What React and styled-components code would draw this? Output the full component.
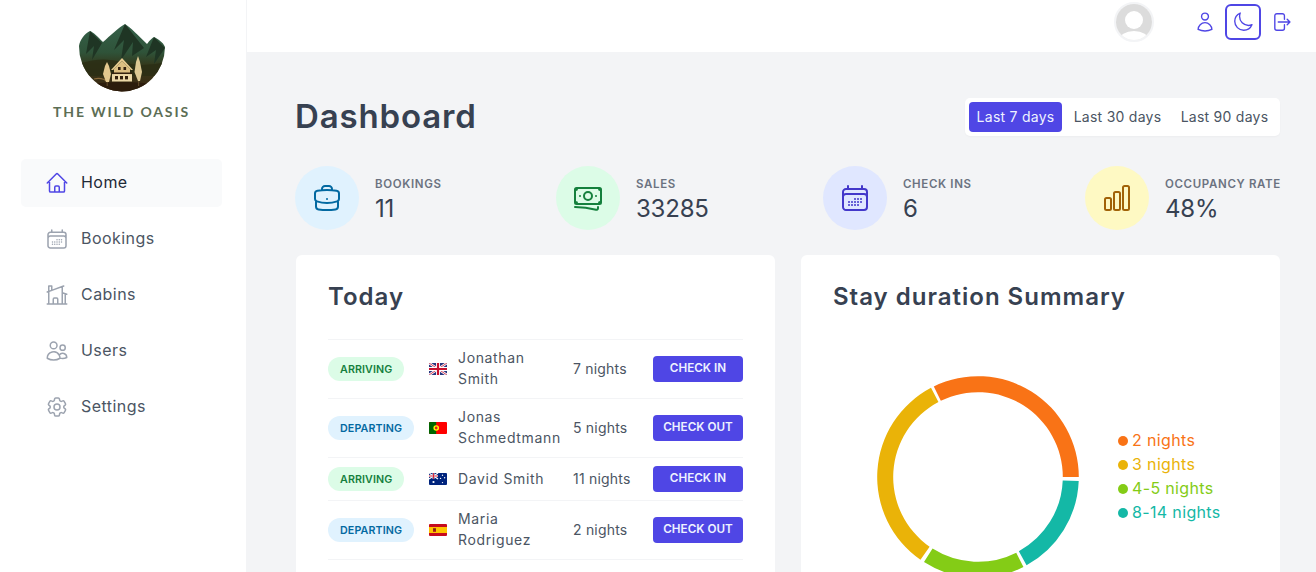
import React from "react";
import styled, { createGlobalStyle } from "styled-components";
import {
  HiOutlineHome,
  HiOutlineCalendarDays,
  HiOutlineHomeModern,
  HiOutlineUsers,
  HiOutlineCog6Tooth,
  HiOutlineBriefcase,
  HiOutlineBanknotes,
  HiOutlineChartBar,
  HiOutlineUser,
  HiOutlineMoon,
  HiOutlineArrowRightOnRectangle,
} from "react-icons/hi2";

const GlobalStyle = createGlobalStyle`
  * { box-sizing: border-box; }
  html, body { margin: 0; height: 100%; overflow: hidden; }
  body {
    font-family: Inter, "Noto Sans", "Liberation Sans", sans-serif;
    color: #374151;
    background: #f3f4f6;
  }
`;

const Layout = styled.div`
  display: grid;
  grid-template-columns: 247px 1fr;
  height: 100vh;
  overflow: hidden;
`;

const Sidebar = styled.aside`
  background: #fff;
  border-right: 1px solid #f3f4f6;
  padding: 24px 24px 0 21px;
`;

const LogoBox = styled.div`
  display: flex;
  flex-direction: column;
  align-items: center;
  margin-bottom: 37px;
`;

const LogoText = styled.div`
  font-family: Lato, "Liberation Sans", sans-serif;
  font-size: 14px;
  font-weight: 700;
  line-height: 20px;
  letter-spacing: 1.85px;
  color: #5c6e55;
  margin-top: 10px;
  white-space: nowrap;
`;

const NavList = styled.nav`
  display: flex;
  flex-direction: column;
  gap: 8px;
`;

const NavItem = styled.a`
  display: flex;
  align-items: center;
  gap: 12px;
  height: 48px;
  padding-left: 24px;
  border-radius: 5px;
  font-size: 16px;
  letter-spacing: 0.45px;
  color: ${(p) => (p.$active ? "#1f2937" : "#4b5563")};
  background: ${(p) => (p.$active ? "#f9fafb" : "transparent")};
  svg {
    width: 24px;
    height: 24px;
    color: ${(p) => (p.$active ? "#4f46e5" : "#9ca3af")};
  }
`;

const NavLabel = styled.span`
  margin-bottom: 2px;
`;

const Column = styled.div`
  display: flex;
  flex-direction: column;
  min-width: 0;
`;

const Header = styled.header`
  display: flex;
  justify-content: flex-end;
  align-items: center;
  height: 52px;
  padding: 2px 17px 10px 0;
  background: #fff;
`;

const Avatar = styled.div`
  width: 40px;
  height: 40px;
  border-radius: 50%;
  border: 2px solid #f3f4f6;
  overflow: hidden;
  margin-right: 33px;
  svg { display: block; }
`;

const HeaderIcons = styled.div`
  display: flex;
  gap: 2px;
`;

const IconButton = styled.button`
  display: flex;
  align-items: center;
  justify-content: center;
  width: 36px;
  height: 36px;
  padding: 0;
  background: none;
  border: ${(p) => (p.$focused ? "2px solid #4f46e5" : "none")};
  border-radius: 6px;
  color: #4f46e5;
  svg { width: 22px; height: 22px; }
`;

const Main = styled.main`
  padding: 46px 36px 0 49px;
`;

const TitleRow = styled.div`
  display: flex;
  justify-content: space-between;
  align-items: center;
  height: 38px;
`;

const PageTitle = styled.h1`
  margin: 0 0 2px -1px;
  font-size: 33px;
  font-weight: 600;
  letter-spacing: 0.85px;
  color: #374151;
`;

const Filter = styled.div`
  display: flex;
  align-items: center;
  height: 38px;
  width: 315px;
  padding: 4px;
  background: #fff;
  border-radius: 5px;
  box-shadow: 0 1px 2px rgba(0, 0, 0, 0.03);
`;

const FilterButton = styled.button`
  height: 30px;
  width: ${(p) => p.$width}px;
  padding: 0 0 2px;
  border: none;
  border-radius: 4px;
  font-family: inherit;
  font-size: 14px;
  letter-spacing: 0.25px;
  white-space: nowrap;
  background: ${(p) => (p.$active ? "#4f46e5" : "transparent")};
  color: ${(p) => (p.$active ? "#eef2ff" : "#4b5563")};
`;

const StatsRow = styled.div`
  display: grid;
  grid-template-columns: 261px 267px 262px 1fr;
  margin: 30px 0 25px -1px;
`;

const Stat = styled.div`
  display: flex;
  align-items: center;
  gap: 16px;
  white-space: nowrap;
`;

const StatIcon = styled.div`
  display: flex;
  align-items: center;
  justify-content: center;
  width: 64px;
  height: 64px;
  border-radius: 50%;
  background: ${(p) => p.$bg};
  color: ${(p) => p.$color};
  svg { width: 32px; height: 32px; }
`;

const StatText = styled.div`
  padding-top: 4px;
`;

const StatLabel = styled.div`
  font-size: 11.5px;
  font-weight: 600;
  line-height: 16px;
  letter-spacing: 0.65px;
  text-transform: uppercase;
  color: #6b7280;
`;

const StatValue = styled.div`
  margin-top: 1px;
  font-size: 24px;
  line-height: 32px;
  letter-spacing: -0.2px;
  color: #374151;
`;

const CardGrid = styled.div`
  display: grid;
  grid-template-columns: 1fr 1fr;
  gap: 26px;
`;

const Card = styled.section`
  background: #fff;
  border-radius: 6px;
  padding: 24px 32px;
  height: 420px;
`;

const CardTitle = styled.h2`
  margin: 0;
  font-size: 24px;
  font-weight: 600;
  line-height: 36px;
  letter-spacing: 1px;
  color: #374151;
`;

const ActivityList = styled.ul`
  list-style: none;
  margin: 24px 0 0;
  padding: 0;
  border-bottom: 1px solid #f3f4f6;
`;

const ActivityRow = styled.li`
  display: grid;
  grid-template-columns: 89px 17px 103px 68px 90px;
  gap: 12px;
  align-items: center;
  padding: 8px 0;
  border-top: 1px solid #f3f4f6;
  font-size: 14px;
  line-height: 21px;
  letter-spacing: 0.2px;
  color: #4b5563;
`;

const Tag = styled.span`
  justify-self: start;
  display: flex;
  align-items: center;
  height: 24px;
  padding: 0 12px;
  border-radius: 100px;
  font-size: 10.7px;
  font-weight: 600;
  letter-spacing: 0.1px;
  text-transform: uppercase;
  white-space: nowrap;
  background: ${(p) => (p.$status === "arriving" ? "#dcfce7" : "#e0f2fe")};
  color: ${(p) => (p.$status === "arriving" ? "#15803d" : "#0369a1")};
`;

const Flag = styled.svg`
  display: block;
  width: 18px;
  height: 12px;
  border-radius: 1px;
`;

const GuestName = styled.div`
  margin: -1px 0 1px;
  letter-spacing: 0.65px;
  color: #4b5563;
`;

const Nights = styled.div`
  margin: -1px 0 1px;
  white-space: nowrap;
  color: #4b5563;
`;

const CheckButton = styled.button`
  height: 26px;
  padding: 0 0 2px;
  border: none;
  border-radius: 4px;
  background: #4f46e5;
  color: #eef2ff;
  font-family: inherit;
  font-size: 11.7px;
  font-weight: 600;
  white-space: nowrap;
  text-transform: uppercase;
`;

const ChartRow = styled.div`
  display: flex;
  align-items: center;
  margin-top: 42px;
  padding-left: 5px;
`;

const Legend = styled.ul`
  list-style: none;
  margin: 0;
  padding: 0;
`;

const LegendItem = styled.li`
  display: flex;
  align-items: center;
  gap: 4px;
  height: 24px;
  font-size: 16px;
  letter-spacing: 0.35px;
  white-space: nowrap;
  color: ${(p) => p.$color};
  &::before {
    content: "";
    width: 10px;
    height: 10px;
    border-radius: 50%;
    background: ${(p) => p.$color};
  }
`;

const LegendLabel = styled.span`
  margin-bottom: 2px;
`;

const navItems = [
  { label: "Home", icon: HiOutlineHome, active: true },
  { label: "Bookings", icon: HiOutlineCalendarDays },
  { label: "Cabins", icon: HiOutlineHomeModern },
  { label: "Users", icon: HiOutlineUsers },
  { label: "Settings", icon: HiOutlineCog6Tooth },
];

const stats = [
  { label: "Bookings", value: "11", icon: HiOutlineBriefcase, bg: "#e0f2fe", color: "#0369a1" },
  { label: "Sales", value: "33285", icon: HiOutlineBanknotes, bg: "#dcfce7", color: "#15803d" },
  { label: "Check ins", value: "6", icon: HiOutlineCalendarDays, bg: "#e0e7ff", color: "#4338ca" },
  { label: "Occupancy rate", value: "48%", icon: HiOutlineChartBar, bg: "#fef9c3", color: "#a16207" },
];

const activities = [
  { status: "arriving", flag: "gb", name: "Jonathan Smith", nights: 7 },
  { status: "departing", flag: "pt", name: "Jonas Schmedtmann", nights: 5 },
  { status: "arriving", flag: "au", name: "David Smith", nights: 11 },
  { status: "departing", flag: "es", name: "Maria Rodriguez", nights: 2 },
];

const slices = [
  { label: "2 nights", color: "#f97316", from: 334, to: 450 },
  { label: "3 nights", color: "#eab308", from: 214.8, to: 332.2 },
  { label: "4-5 nights", color: "#84cc16", from: 153.2, to: 212.4 },
  { label: "8-14 nights", color: "#14b8a6", from: 92.3, to: 151.2 },
];

function FlagIcon({ code }) {
  if (code === "gb") {
    return (
      <Flag viewBox="0 0 18 12">
        <rect width="18" height="12" fill="#27357e" />
        <path d="M0 0L18 12M18 0L0 12" stroke="#fff" strokeWidth="2.4" />
        <path d="M0 0L18 12M18 0L0 12" stroke="#c8102e" strokeWidth="0.8" />
        <path d="M9 0V12M0 6H18" stroke="#fff" strokeWidth="4" />
        <path d="M9 0V12M0 6H18" stroke="#c8102e" strokeWidth="2.2" />
      </Flag>
    );
  }
  if (code === "pt") {
    return (
      <Flag viewBox="0 0 18 12">
        <rect width="18" height="12" fill="#f00" />
        <rect width="7.2" height="12" fill="#060" />
        <circle cx="7.2" cy="6" r="2.8" fill="#ff0" />
        <circle cx="7.2" cy="6" r="1.4" fill="#d22" />
      </Flag>
    );
  }
  if (code === "au") {
    return (
      <Flag viewBox="0 0 18 12">
        <rect width="18" height="12" fill="#00247d" />
        <path d="M0 0L9 6M9 0L0 6" stroke="#fff" strokeWidth="1.2" />
        <path d="M4.5 0V6M0 3H9" stroke="#fff" strokeWidth="1.8" />
        <path d="M4.5 0V6M0 3H9" stroke="#cf142b" strokeWidth="0.9" />
        <circle cx="4.5" cy="9" r="1.1" fill="#fff" />
        <circle cx="13.5" cy="2.2" r="0.7" fill="#fff" />
        <circle cx="11.5" cy="5.4" r="0.7" fill="#fff" />
        <circle cx="15.6" cy="4.8" r="0.7" fill="#fff" />
        <circle cx="13.5" cy="9.6" r="0.7" fill="#fff" />
      </Flag>
    );
  }
  return (
    <Flag viewBox="0 0 18 12">
      <rect width="18" height="12" fill="#c60b1e" />
      <rect y="3" width="18" height="6" fill="#ffc400" />
      <rect x="4" y="4.2" width="3" height="3.6" fill="#ad1519" />
      <rect x="4.6" y="4.8" width="1.8" height="1.4" fill="#5c3d11" />
    </Flag>
  );
}

function Logo() {
  const outline =
    "M1 22 C2 16 6 10 12 7 C15 8 20 13 25 18 C32 12 41 3 47 0 C52 3 61 12 69 20 C72 16 74 14 76 13 C80 15 85 18 87 23 A43 45 0 0 1 1 22 Z";
  return (
    <svg width="88" height="68" viewBox="0 0 88 68">
      <defs>
        <linearGradient id="logoFill" x1="0" y1="0" x2="0" y2="1">
          <stop offset="0" stopColor="#35614a" />
          <stop offset="0.42" stopColor="#2f5339" />
          <stop offset="0.6" stopColor="#33391d" />
          <stop offset="1" stopColor="#3e2810" />
        </linearGradient>
        <clipPath id="logoClip">
          <path d={outline} />
        </clipPath>
      </defs>
      <path d={outline} fill="url(#logoFill)" />
      <g clipPath="url(#logoClip)">
        <path d="M12 7L8 30L16 22L14 36L24 19Z" fill="#1f3524" />
        <path d="M47 0L36 26L46 16L43 36L55 18L54 32L66 24Z" fill="#1f3524" />
        <path d="M76 13L68 33L78 26L76 40L87 24Z" fill="#1f3524" />
        <path d="M0 40Q24 32 44 38T88 38V52H0Z" fill="#2a2d14" opacity="0.8" />
        <path d="M0 62Q44 54 88 62V70H0Z" fill="#2c1c0c" />
        <path d="M16 55Q24 53 30 58" stroke="#8a6a3c" strokeWidth="1.2" fill="none" />
      </g>
      <path d="M28 58L25 50L27 42L29 38L31 42L33 50L31 58Z" fill="#e3c88f" />
      <rect x="28.6" y="58" width="1.2" height="4" fill="#5c4526" />
      <path d="M60 57L56.5 48L58 38L60 32L62 38L64 48L62 57Z" fill="#dcc894" />
      <rect x="60" y="57" width="1.2" height="5" fill="#5c4526" />
      <path d="M33 46L44 34L55 46L53 46L44 37L35 46Z" fill="#e5c98f" />
      <path d="M36 45L44 37L52 45V57H36Z" fill="#dcbf82" />
      <rect x="34" y="48.5" width="20" height="1.6" fill="#33210f" />
      <rect x="34" y="50.1" width="20" height="7.4" fill="#ecd8a8" />
      <rect x="37" y="52" width="3" height="3.4" fill="#33210f" />
      <rect x="42" y="52" width="3" height="3.4" fill="#33210f" />
      <rect x="47" y="52" width="3" height="3.4" fill="#33210f" />
      <rect x="40" y="43" width="2.6" height="3" fill="#33210f" />
      <rect x="45.5" y="43" width="2.6" height="3" fill="#33210f" />
    </svg>
  );
}

function polar(r, deg) {
  const a = ((deg - 90) * Math.PI) / 180;
  return `${(140 + r * Math.cos(a)).toFixed(2)} ${(120 + r * Math.sin(a)).toFixed(2)}`;
}

function slicePath({ from, to }) {
  const outer = 100.8;
  const inner = 84.8;
  const large = to - from > 180 ? 1 : 0;
  return `M${polar(outer, from)}A${outer} ${outer} 0 ${large} 1 ${polar(outer, to)}L${polar(inner, to)}A${inner} ${inner} 0 ${large} 0 ${polar(inner, from)}Z`;
}

export default function App() {
  return (
    <>
      <GlobalStyle />
      <Layout>
        <Sidebar>
          <LogoBox>
            <Logo />
            <LogoText>THE WILD OASIS</LogoText>
          </LogoBox>
          <NavList>
            {navItems.map((item) => (
              <NavItem key={item.label} $active={item.active}>
                <item.icon />
                <NavLabel>{item.label}</NavLabel>
              </NavItem>
            ))}
          </NavList>
        </Sidebar>

        <Column>
          <Header>
            <Avatar>
              <svg width="36" height="36" viewBox="0 0 36 36">
                <rect width="36" height="36" fill="#dcdcdc" />
                <circle cx="18" cy="16" r="9" fill="#fff" />
                <ellipse cx="18" cy="36" rx="15" ry="9" fill="#fff" />
              </svg>
            </Avatar>
            <HeaderIcons>
              <IconButton><HiOutlineUser /></IconButton>
              <IconButton $focused><HiOutlineMoon /></IconButton>
              <IconButton><HiOutlineArrowRightOnRectangle /></IconButton>
            </HeaderIcons>
          </Header>

          <Main>
            <TitleRow>
              <PageTitle>Dashboard</PageTitle>
              <Filter>
                <FilterButton $active $width={93}>Last 7 days</FilterButton>
                <FilterButton $width={111}>Last 30 days</FilterButton>
                <FilterButton $width={103}>Last 90 days</FilterButton>
              </Filter>
            </TitleRow>

            <StatsRow>
              {stats.map((stat) => (
                <Stat key={stat.label}>
                  <StatIcon $bg={stat.bg} $color={stat.color}>
                    <stat.icon />
                  </StatIcon>
                  <StatText>
                    <StatLabel>{stat.label}</StatLabel>
                    <StatValue>{stat.value}</StatValue>
                  </StatText>
                </Stat>
              ))}
            </StatsRow>

            <CardGrid>
              <Card>
                <CardTitle>Today</CardTitle>
                <ActivityList>
                  {activities.map((a) => (
                    <ActivityRow key={a.name}>
                      <Tag $status={a.status}>{a.status}</Tag>
                      <FlagIcon code={a.flag} />
                      <GuestName>{a.name}</GuestName>
                      <Nights>{a.nights} nights</Nights>
                      <CheckButton>{a.status === "arriving" ? "Check in" : "Check out"}</CheckButton>
                    </ActivityRow>
                  ))}
                </ActivityList>
              </Card>

              <Card>
                <CardTitle>Stay duration Summary</CardTitle>
                <ChartRow>
                  <svg width="280" height="240" viewBox="0 0 280 240">
                    {slices.map((s) => (
                      <path key={s.label} d={slicePath(s)} fill={s.color} />
                    ))}
                  </svg>
                  <Legend>
                    {slices.map((s) => (
                      <LegendItem key={s.label} $color={s.color}>
                        <LegendLabel>{s.label}</LegendLabel>
                      </LegendItem>
                    ))}
                  </Legend>
                </ChartRow>
              </Card>
            </CardGrid>
          </Main>
        </Column>
      </Layout>
    </>
  );
}
